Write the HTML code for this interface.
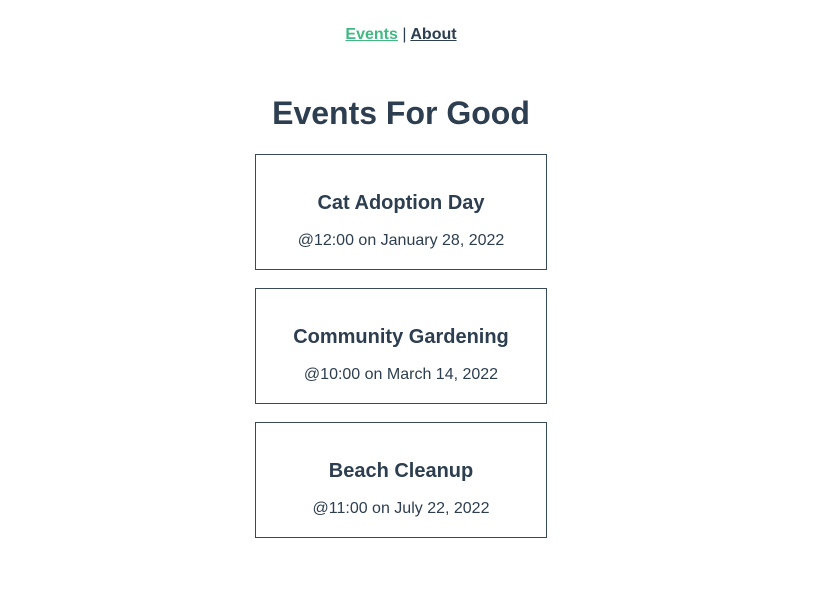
<!DOCTYPE html>
<html><head><meta charset="utf-8"><style>
html,body{margin:0;padding:0;background:#fff;}
body{width:802px;height:613px;font-family:"Liberation Sans",Arial,sans-serif;color:#2c3e50;text-align:center;position:relative;}
#nav{position:absolute;top:26px;left:0;width:802px;font-size:16px;font-weight:bold;line-height:18px;}
#nav a{color:#2c3e50;text-decoration:underline;}
#nav a.act{color:#42b983;}
#nav span{font-weight:normal;}
h1{position:absolute;top:94px;left:0;width:802px;margin:0;font-size:32px;line-height:38px;font-weight:bold;}
.card{position:absolute;left:255px;width:290px;height:114px;border:1px solid #39495c;}
.card .t{position:absolute;top:37px;left:0;width:100%;font-size:20px;font-weight:bold;line-height:23px;}
.card .d{position:absolute;top:77px;left:0;width:100%;font-size:16px;line-height:18px;}
</style></head><body>
<div id="nav"><a class="act">Events</a> <span>|</span> <a>About</a></div>
<h1>Events For Good</h1>
<div class="card" style="top:154px"><div class="t">Cat Adoption Day</div><div class="d">@12:00 on January 28, 2022</div></div>
<div class="card" style="top:288px"><div class="t">Community Gardening</div><div class="d">@10:00 on March 14, 2022</div></div>
<div class="card" style="top:422px"><div class="t">Beach Cleanup</div><div class="d">@11:00 on July 22, 2022</div></div>
</body></html>
